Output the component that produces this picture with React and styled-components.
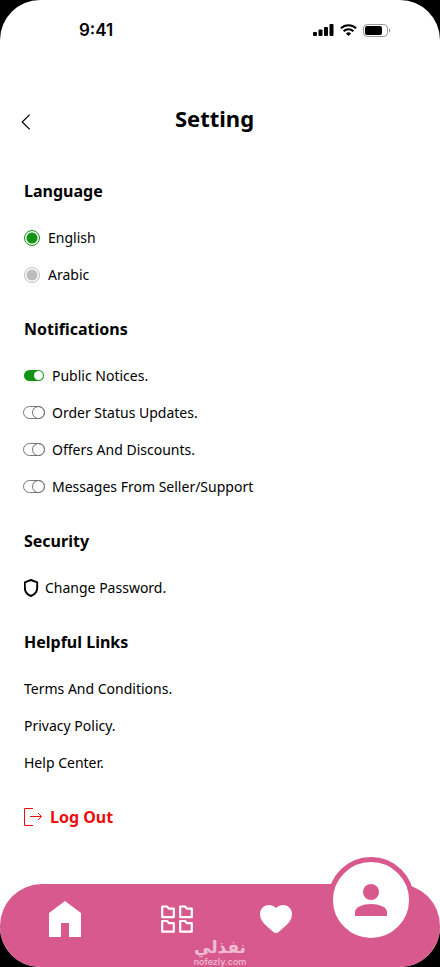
import React, {useState} from 'react'
import styled, {createGlobalStyle} from 'styled-components';

const GlobalStyle = createGlobalStyle`
  * {
    box-sizing:border-box;
  }
  body {
    margin:0;
    background-color:#000;
    color:#000;
    font-family:"Noto Sans", sans-serif;
  }
`

const Screen = styled.div`
  position:relative;
  display:flex;
  flex-direction:column;
  min-height:100vh;
  border-radius:40px;
  overflow:hidden;
  background-color:#fff;
`

const StatusBar = styled.div`
  display:flex;
  align-items:center;
  justify-content:space-between;
  height:60px;
  padding:0 50px 0 79px;
  font-family:Inter, sans-serif;
  font-size:17px;
  font-weight:600;
`

const StatusIcons = styled.div`
  display:flex;
  align-items:center;
  gap:6px;
`

const Header = styled.header`
  display:grid;
  grid-template-columns:32px 1fr 32px;
  align-items:center;
  height:34px;
  margin:41px 21px 43px 10px;
`

const BackButton = styled.button`
  display:flex;
  justify-content:center;
  padding:8px 0 0;
  border:0;
  background:none;
  cursor:pointer;
`

const Title = styled.h1`
  margin:0;
  font-size:22px;
  line-height:34px;
  font-weight:700;
  text-align:center;
`

const Content = styled.main`
  display:flex;
  flex-direction:column;
  align-items:flex-start;
  gap:31px;
  padding:0 24px 54px;
`

const SectionBox = styled.section`
  display:flex;
  flex-direction:column;
  align-items:flex-start;
  gap:16px;
`

const SectionTitle = styled.h2`
  margin:0 0 7px;
  font-size:16px;
  line-height:26px;
  font-weight:700;
`

const Option = styled.label`
  display:flex;
  align-items:center;
  gap:8px;
  font-size:14px;
  line-height:21px;
  cursor:pointer;
`

const Radio = styled.input.attrs({type:'radio'})`
  appearance:none;
  width:16px;
  height:16px;
  margin:0;
  border:1px solid #bdbdbd;
  border-radius:50%;
  background:radial-gradient(circle, #bdbdbd 5px, transparent 6px);

  &:checked {
    border-color:#149414;
    background:radial-gradient(circle, #149414 5px, transparent 6px);
  }
`

const Switch = styled.input.attrs({type:'checkbox', role:'switch'})`
  appearance:none;
  display:flex;
  justify-content:flex-end;
  width:20px;
  height:11px;
  margin:0;
  border-radius:6px;
  outline:1px solid #777;

  &::before {
    content:'';
    width:11px;
    height:11px;
    border-radius:50%;
    box-shadow:0 0 0 1px #777;
  }

  &:checked {
    outline:0;
    background-color:#149414;
  }

  &:checked::before {
    width:9px;
    height:9px;
    margin:1px;
    background-color:#fff;
    box-shadow:none;
  }
`

const TextLink = styled.a`
  display:flex;
  align-items:center;
  gap:6px;
  color:inherit;
  font-size:14px;
  line-height:21px;
  text-decoration:none;
`

const LogoutButton = styled.button`
  display:flex;
  align-items:center;
  gap:8px;
  padding:0;
  border:0;
  background:none;
  color:#ec0c0c;
  font-family:inherit;
  font-size:16px;
  line-height:26px;
  font-weight:700;
  cursor:pointer;
`

const BottomNav = styled.nav`
  display:grid;
  grid-template-columns:130fr 94fr 104fr 86fr;
  align-items:start;
  height:83px;
  margin-top:auto;
  padding-right:26px;
  border-radius:42px 42px 0 0;
  background-color:#d8598d;
`

const NavLink = styled.a`
  display:flex;
  align-items:center;
  justify-content:center;
  height:70px;
  color:#fff;
`

const ProfileLink = styled.a`
  display:flex;
  align-items:center;
  justify-content:center;
  justify-self:center;
  width:86px;
  height:86px;
  margin-top:-27px;
  border:5px solid #d8598d;
  border-radius:50%;
  background-color:#fff;
  color:#d8598d;
`

const Watermark = styled.div`
  position:absolute;
  bottom:0;
  left:50%;
  transform:translateX(-50%);
  display:flex;
  flex-direction:column;
  align-items:center;
  color:#fff;
  opacity:0.6;
  font-family:"DejaVu Sans", sans-serif;
  font-weight:700;
  pointer-events:none;
`

const WatermarkName = styled.span`
  font-size:17px;
  line-height:20px;
`

const WatermarkSite = styled.span`
  font-family:Inter, sans-serif;
  font-size:9px;
  line-height:10px;
  font-weight:500;
`

const SignalIcon = () => (
  <svg width="21" height="12" viewBox="0 0 21 12" fill="currentColor">
    <rect x="0" y="8" width="4" height="4" rx="1"/>
    <rect x="5.5" y="5.6" width="4" height="6.4" rx="1"/>
    <rect x="11" y="3" width="4" height="9" rx="1"/>
    <rect x="16.5" y="0" width="4" height="12" rx="1"/>
  </svg>
)

const WifiIcon = () => (
  <svg width="17" height="12" viewBox="0 0 17 12" fill="none" stroke="currentColor" strokeWidth="2.2">
    <path d="M.9 4.3a11 11 0 0 1 15.2 0"/>
    <path d="M3.6 7.2a7.1 7.1 0 0 1 9.8 0"/>
    <path d="M8.5 12 5.9 9.4a3.8 3.8 0 0 1 5.2 0z" fill="currentColor" stroke="none"/>
  </svg>
)

const BatteryIcon = () => (
  <svg width="27" height="13" viewBox="0 0 27 13">
    <rect x=".5" y=".5" width="24" height="12" rx="3.8" fill="none" stroke="currentColor" opacity=".4"/>
    <rect x="2" y="2" width="17" height="9" rx="2" fill="currentColor"/>
    <path d="M26 4.5v4a2.2 2.2 0 0 0 0-4z" fill="currentColor" opacity=".45"/>
  </svg>
)

const BackIcon = () => (
  <svg width="10" height="18" viewBox="0 0 10 18" fill="none" stroke="#000" strokeWidth="1.2">
    <path d="M8.700 1.600 1.200 9l7.500 7.400"/>
  </svg>
)

const ShieldIcon = () => (
  <svg width="15" height="18" viewBox="0 0 15 18" fill="none" stroke="currentColor" strokeWidth="1.9" strokeLinejoin="round">
    <path d="M7 1 13.200 3.300V8.600c0 4-2.300 7.100-6.200 8.400C3.100 15.700.8 12.600.8 8.600V3.300z"/>
  </svg>
)

const LogoutIcon = () => (
  <svg width="18" height="18" viewBox="0 0 18 18" fill="none" stroke="currentColor" strokeWidth="1">
    <path d="M9 .5H.5v17H9"/>
    <path d="M6 8.500h11.300M14 5l3.500 3.500L14 12"/>
  </svg>
)

const HomeIcon = () => (
  <svg width="32" height="36" viewBox="0 0 32 36" fill="currentColor">
    <path d="M16 0 32 12v24H20V22h-8v14H0V12z"/>
  </svg>
)

const CategoriesIcon = () => (
  <svg width="32" height="28" viewBox="0 0 32 28" fill="none" stroke="currentColor" strokeWidth="2.2" strokeLinejoin="round">
    <path d="M1.200 1.500h4.800l2 2.200h4.800v8.500H1.200z"/>
    <path d="M19.200 1.500h4.800l2 2.200h4.800v8.500H19.200z"/>
    <path d="M1.200 16h4.800l2 2.200h4.800v8.500H1.200z"/>
    <path d="M19.200 16h4.800l2 2.200h4.800v8.500H19.200z"/>
  </svg>
)

const HeartIcon = () => (
  <svg width="32" height="28" viewBox="0 0 32 28" fill="currentColor">
    <path d="M16 3C18 1 20.500 0 23 0c5.200 0 9 4 9 9.200 0 4.400-2.500 8-6 11.200l-7.400 6.600c-1.600 1.300-3.600 1.300-5.200 0L6 20.400C2.500 17.200 0 13.600 0 9.200 0 4 3.800 0 9 0c2.500 0 5 1 7 3z"/>
  </svg>
)

const ProfileIcon = () => (
  <svg width="32" height="32" viewBox="0 0 32 32" fill="currentColor">
    <circle cx="16" cy="8" r="8"/>
    <path d="M0 32v-4c0-5 8-8 16-8s16 3 16 8v4z"/>
  </svg>
)

const languages = ['English', 'Arabic']

const notices = [
  'Public Notices.',
  'Order Status Updates.',
  'Offers And Discounts.',
  'Messages From Seller/Support'
]

const helpLinks = ['Terms And Conditions.', 'Privacy Policy.', 'Help Center.']

function Section({title, children}) {
  return (
    <SectionBox>
      <SectionTitle>{title}</SectionTitle>
      {children}
    </SectionBox>
  )
}

export default function App() {
  const [language, setLanguage] = useState('English')
  const [enabled, setEnabled] = useState(['Public Notices.'])

  const toggleNotice = (name) => {
    setEnabled(enabled.includes(name) ? enabled.filter(item => item !== name) : [...enabled, name])
  }

  return (
    <Screen>
      <GlobalStyle />
      <StatusBar>
        <span>9:41</span>
        <StatusIcons>
          <SignalIcon />
          <WifiIcon />
          <BatteryIcon />
        </StatusIcons>
      </StatusBar>

      <Header>
        <BackButton aria-label="Back"><BackIcon /></BackButton>
        <Title>Setting</Title>
      </Header>

      <Content>
        <Section title="Language">
          {languages.map(name => (
            <Option key={name}>
              <Radio name="language" value={name} checked={language === name} onChange={() => setLanguage(name)}/>
              {name}
            </Option>
          ))}
        </Section>

        <Section title="Notifications">
          {notices.map(name => (
            <Option key={name}>
              <Switch checked={enabled.includes(name)} onChange={() => toggleNotice(name)}/>
              {name}
            </Option>
          ))}
        </Section>

        <Section title="Security">
          <TextLink href="#password"><ShieldIcon />Change Password.</TextLink>
        </Section>

        <Section title="Helpful Links">
          {helpLinks.map(name => (
            <TextLink key={name} href="#help">{name}</TextLink>
          ))}
        </Section>

        <LogoutButton><LogoutIcon />Log Out</LogoutButton>
      </Content>

      <BottomNav>
        <NavLink href="#home" aria-label="Home"><HomeIcon /></NavLink>
        <NavLink href="#categories" aria-label="Categories"><CategoriesIcon /></NavLink>
        <NavLink href="#favorites" aria-label="Favorites"><HeartIcon /></NavLink>
        <ProfileLink href="#profile" aria-label="Profile"><ProfileIcon /></ProfileLink>
      </BottomNav>

      <Watermark>
        <WatermarkName lang="ar" dir="rtl">نفذلي</WatermarkName>
        <WatermarkSite>nofezly.com</WatermarkSite>
      </Watermark>
    </Screen>
  )
}
